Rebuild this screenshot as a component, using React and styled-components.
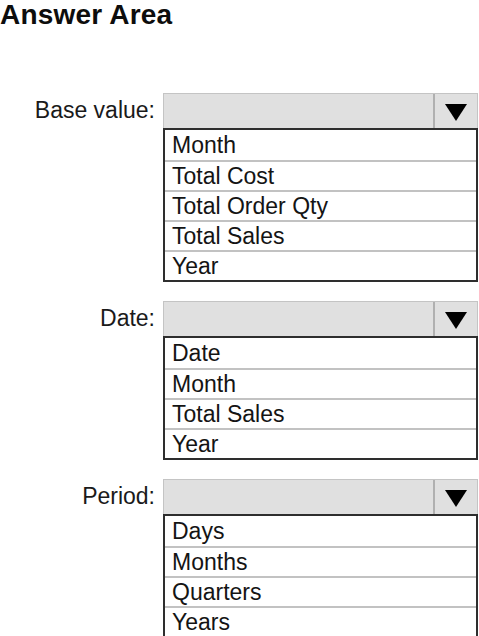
import React from "react";
import styled, { createGlobalStyle } from "styled-components";

const GlobalStyle = createGlobalStyle`
  body {
    margin: 0;
    background: #ffffff;
    font-family: "Liberation Sans", Arial, sans-serif;
    color: #111111;
  }
`;

const questions = [
  { label: "Base value:", options: ["Month", "Total Cost", "Total Order Qty", "Total Sales", "Year"] },
  { label: "Date:", options: ["Date", "Month", "Total Sales", "Year"] },
  { label: "Period:", options: ["Days", "Months", "Quarters", "Years"] },
];

function App() {
  return (
    <Page>
      <GlobalStyle />
      <Title>Answer Area</Title>
      <Sections>
        {questions.map((q) => (
          <Question key={q.label}>
            <Label>{q.label}</Label>
            <Combo>
              <SelectBox>
                <SelectValue />
                <ArrowButton>
                  <svg width="24" height="19" viewBox="0 0 24 19">
                    <polygon points="1,1 23,1 12,18" fill="#000" />
                  </svg>
                </ArrowButton>
              </SelectBox>
              <OptionList>
                {q.options.map((opt) => (
                  <Option key={opt}>{opt}</Option>
                ))}
              </OptionList>
            </Combo>
          </Question>
        ))}
      </Sections>
    </Page>
  );
}

const Page = styled.div`
  display: flex;
  flex-direction: column;
  width: 479px;
`;

const Title = styled.h1`
  margin: 0;
  font-size: 28px;
  line-height: 30px;
  font-weight: bold;
  color: #0d0d0d;
  letter-spacing: 0.2px;
`;

const Sections = styled.div`
  display: flex;
  flex-direction: column;
  gap: 19px;
  margin-top: 63px;
`;

const Question = styled.div`
  display: grid;
  grid-template-columns: 155px 315px;
  column-gap: 8px;
  align-items: start;
`;

const Label = styled.div`
  text-align: right;
  font-size: 23px;
  line-height: 35px;
  color: #1a1a1a;
`;

const Combo = styled.div`
  display: flex;
  flex-direction: column;
`;

const SelectBox = styled.div`
  display: flex;
  height: 35px;
  box-sizing: border-box;
  background: #e0e0e0;
  border: 1px solid #c4c4c4;
  border-bottom: none;
`;

const SelectValue = styled.div`
  flex: 1;
  border-right: 2px solid #b0b0b0;
`;

const ArrowButton = styled.div`
  width: 42px;
  display: flex;
  align-items: center;
  justify-content: center;
  padding-top: 2px;
`;

const OptionList = styled.div`
  display: flex;
  flex-direction: column;
  border: 2px solid #2e2e2e;
`;

const Option = styled.div`
  height: 30px;
  line-height: 30px;
  padding-left: 7px;
  font-size: 23px;
  color: #141414;

  & + & {
    border-top: 2px solid #c2c2c2;
    height: 28px;
    line-height: 28px;
  }
`;

export default App;
